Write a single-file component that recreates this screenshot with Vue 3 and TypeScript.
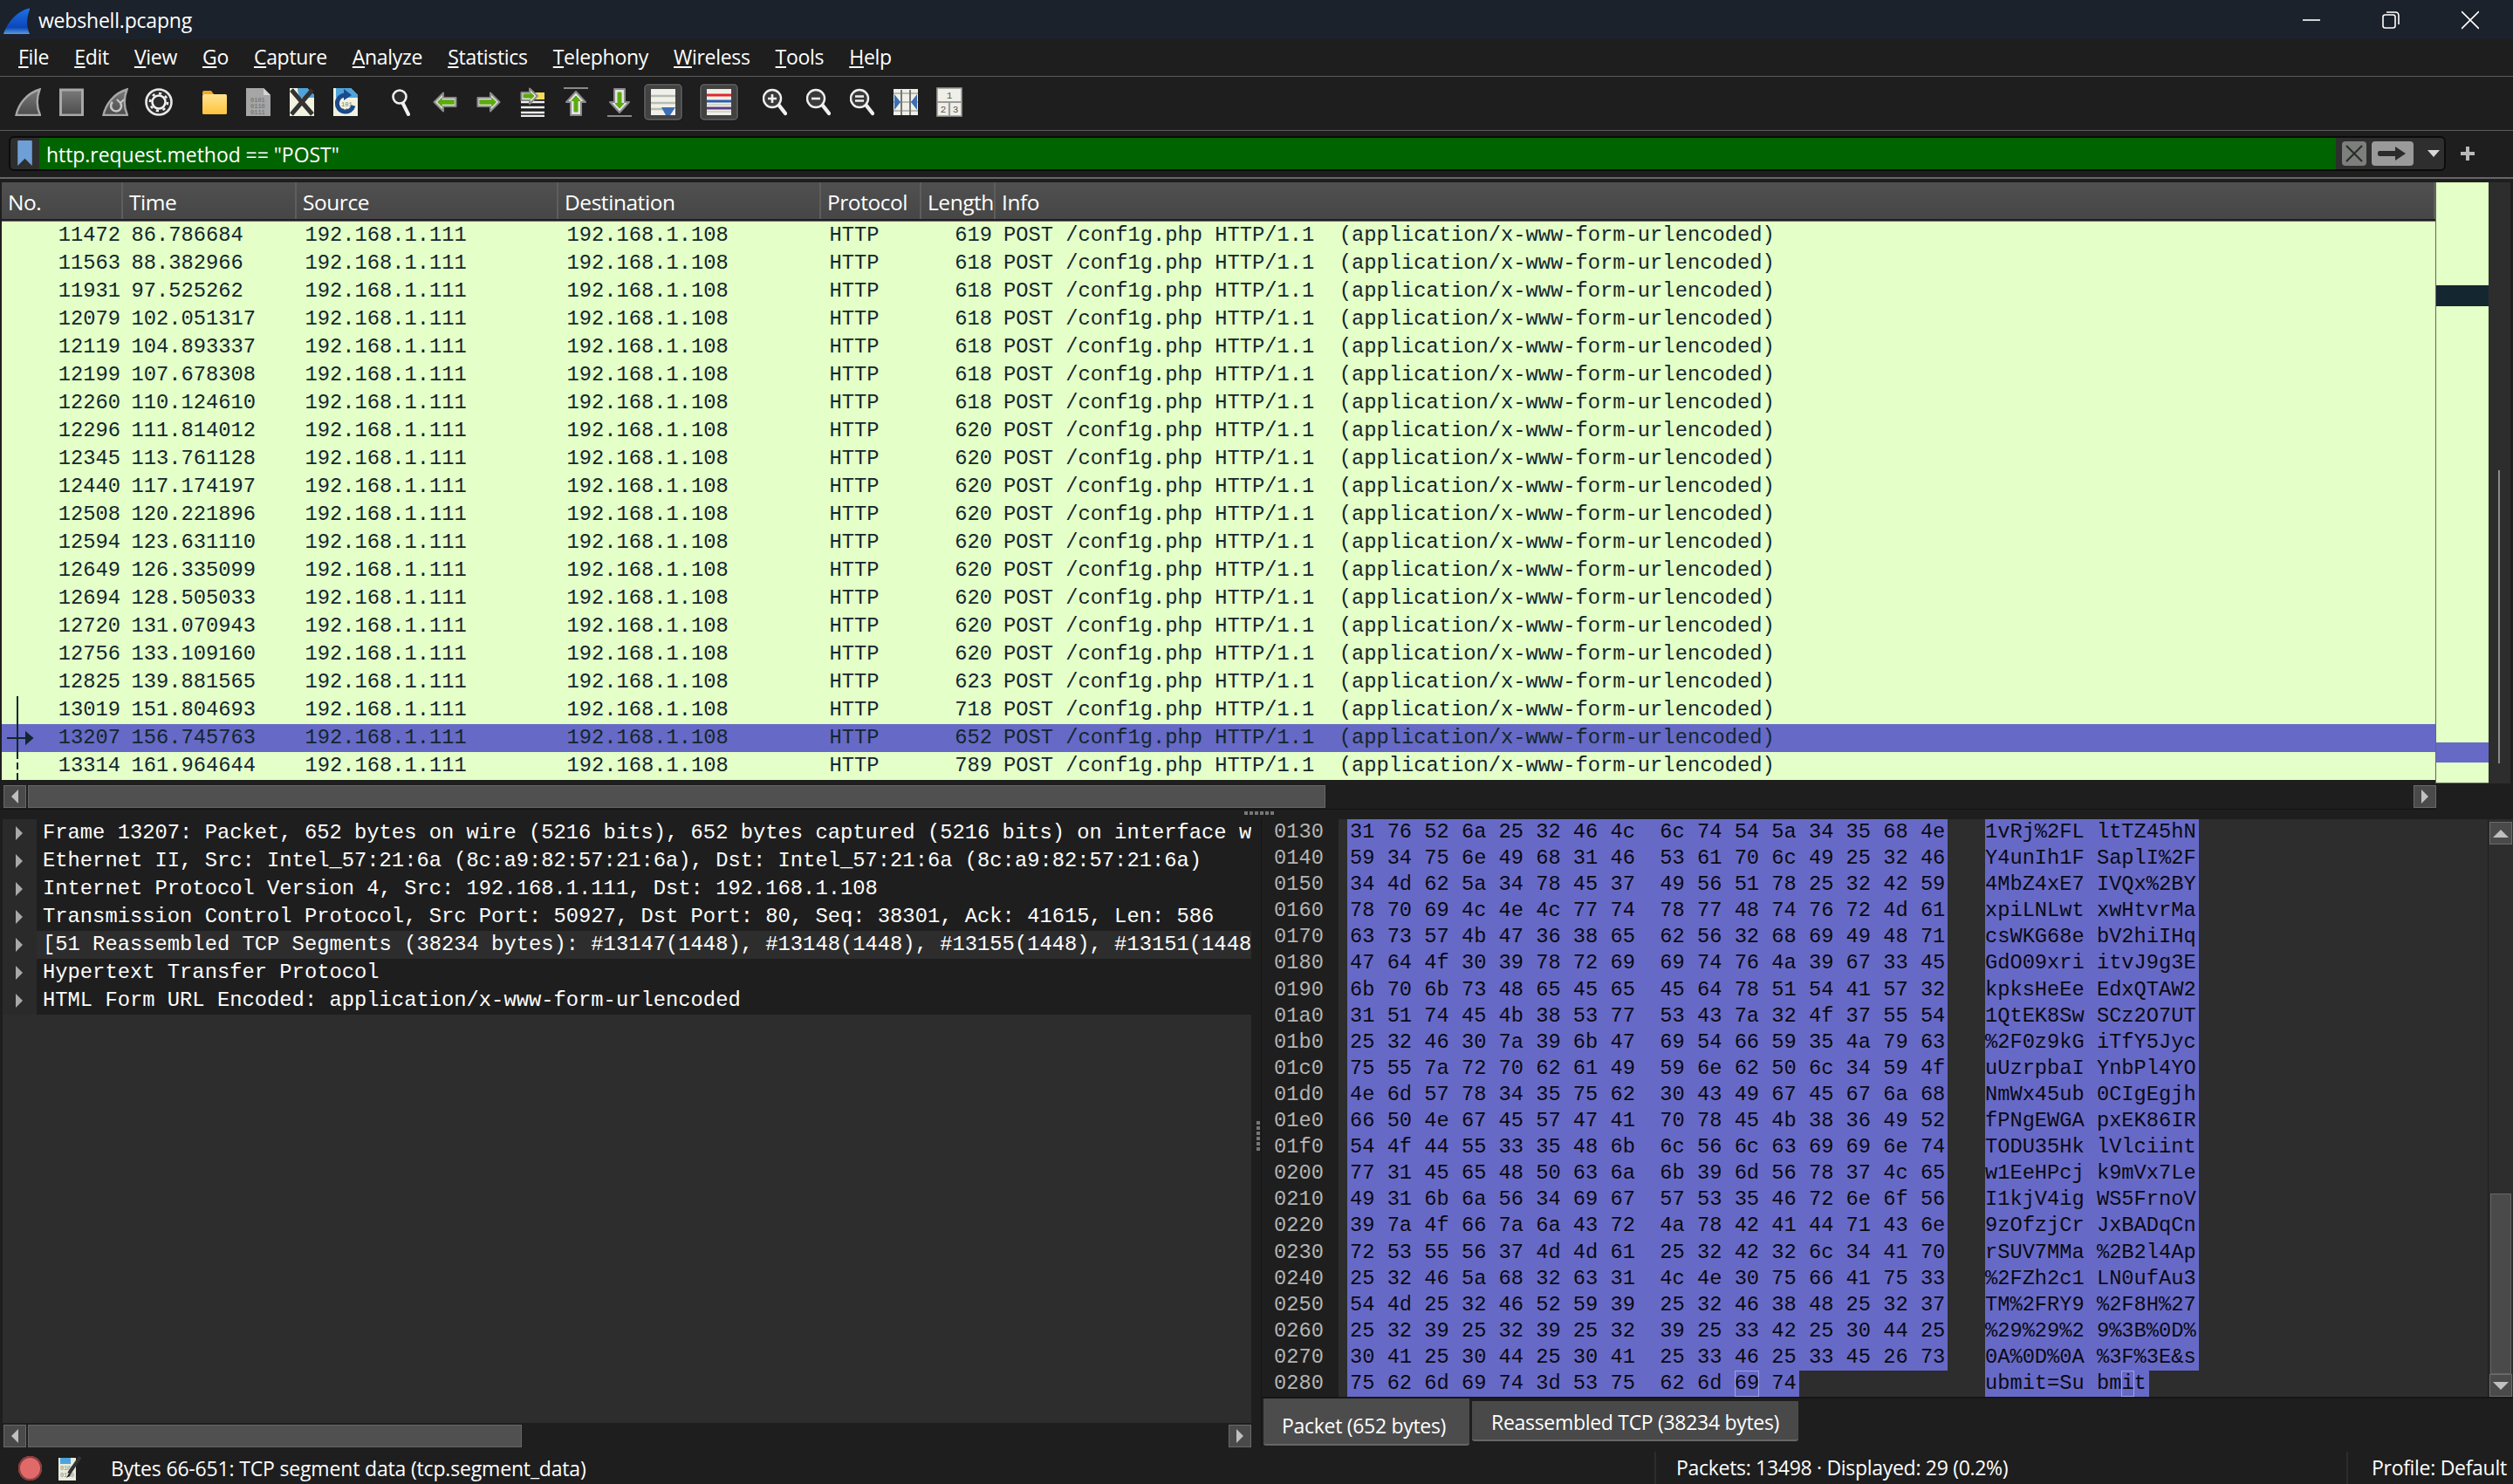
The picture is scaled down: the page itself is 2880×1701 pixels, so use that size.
<script setup lang="ts">
import { computed } from 'vue'

interface HexRow {
  offset: string
  hexBefore: string
  hexHot: string
  hexAfter: string
  asciiBefore: string
  asciiHot: string
  asciiAfter: string
}

const menus = ['File', 'Edit', 'View', 'Go', 'Capture', 'Analyze', 'Statistics', 'Telephony', 'Wireless', 'Tools', 'Help']

const columns = ['No.', 'Time', 'Source', 'Destination', 'Protocol', 'Length', 'Info']

const infoText = 'POST /conf1g.php HTTP/1.1  (application/x-www-form-urlencoded)'

const packets: [string, string, string][] = [
  ['11472', '86.786684', '619'],
  ['11563', '88.382966', '618'],
  ['11931', '97.525262', '618'],
  ['12079', '102.051317', '618'],
  ['12119', '104.893337', '618'],
  ['12199', '107.678308', '618'],
  ['12260', '110.124610', '618'],
  ['12296', '111.814012', '620'],
  ['12345', '113.761128', '620'],
  ['12440', '117.174197', '620'],
  ['12508', '120.221896', '620'],
  ['12594', '123.631110', '620'],
  ['12649', '126.335099', '620'],
  ['12694', '128.505033', '620'],
  ['12720', '131.070943', '620'],
  ['12756', '133.109160', '620'],
  ['12825', '139.881565', '623'],
  ['13019', '151.804693', '718'],
  ['13207', '156.745763', '652'],
  ['13314', '161.964644', '789']
]

const details = [
  'Frame 13207: Packet, 652 bytes on wire (5216 bits), 652 bytes captured (5216 bits) on interface w',
  'Ethernet II, Src: Intel_57:21:6a (8c:a9:82:57:21:6a), Dst: Intel_57:21:6a (8c:a9:82:57:21:6a)',
  'Internet Protocol Version 4, Src: 192.168.1.111, Dst: 192.168.1.108',
  'Transmission Control Protocol, Src Port: 50927, Dst Port: 80, Seq: 38301, Ack: 41615, Len: 586',
  '[51 Reassembled TCP Segments (38234 bytes): #13147(1448), #13148(1448), #13155(1448), #13151(1448',
  'Hypertext Transfer Protocol',
  'HTML Form URL Encoded: application/x-www-form-urlencoded'
]

const rawHex = [
  '31 76 52 6a 25 32 46 4c 6c 74 54 5a 34 35 68 4e',
  '59 34 75 6e 49 68 31 46 53 61 70 6c 49 25 32 46',
  '34 4d 62 5a 34 78 45 37 49 56 51 78 25 32 42 59',
  '78 70 69 4c 4e 4c 77 74 78 77 48 74 76 72 4d 61',
  '63 73 57 4b 47 36 38 65 62 56 32 68 69 49 48 71',
  '47 64 4f 30 39 78 72 69 69 74 76 4a 39 67 33 45',
  '6b 70 6b 73 48 65 45 65 45 64 78 51 54 41 57 32',
  '31 51 74 45 4b 38 53 77 53 43 7a 32 4f 37 55 54',
  '25 32 46 30 7a 39 6b 47 69 54 66 59 35 4a 79 63',
  '75 55 7a 72 70 62 61 49 59 6e 62 50 6c 34 59 4f',
  '4e 6d 57 78 34 35 75 62 30 43 49 67 45 67 6a 68',
  '66 50 4e 67 45 57 47 41 70 78 45 4b 38 36 49 52',
  '54 4f 44 55 33 35 48 6b 6c 56 6c 63 69 69 6e 74',
  '77 31 45 65 48 50 63 6a 6b 39 6d 56 78 37 4c 65',
  '49 31 6b 6a 56 34 69 67 57 53 35 46 72 6e 6f 56',
  '39 7a 4f 66 7a 6a 43 72 4a 78 42 41 44 71 43 6e',
  '72 53 55 56 37 4d 4d 61 25 32 42 32 6c 34 41 70',
  '25 32 46 5a 68 32 63 31 4c 4e 30 75 66 41 75 33',
  '54 4d 25 32 46 52 59 39 25 32 46 38 48 25 32 37',
  '25 32 39 25 32 39 25 32 39 25 33 42 25 30 44 25',
  '30 41 25 30 44 25 30 41 25 33 46 25 33 45 26 73',
  '75 62 6d 69 74 3d 53 75 62 6d 69 74'
]

// the byte under the cursor is boxed in both columns
const HOT_BYTE = 10

const hexRows = computed<HexRow[]>(() =>
  rawHex.map((line, i) => {
    const bytes = line.split(' ')
    const hexPart = (from: number, to: number) =>
      bytes.map((b, n) => ({ b, n })).slice(from, to)
        .map(({ b, n }) => (n === 8 ? ' ' : '') + b).join(' ')
    const asciiPart = (from: number, to: number) =>
      bytes.map((b, n) => ({ b, n })).slice(from, to)
        .map(({ b, n }) => (n === 8 ? ' ' : '') + String.fromCharCode(parseInt(b, 16))).join('')
    const isLast = i === rawHex.length - 1
    const offset = (0x130 + i * 16).toString(16).padStart(4, '0')
    if (!isLast) {
      return {
        offset,
        hexBefore: hexPart(0, 16),
        hexHot: '',
        hexAfter: '',
        asciiBefore: asciiPart(0, 16),
        asciiHot: '',
        asciiAfter: ''
      }
    }
    return {
      offset,
      hexBefore: hexPart(0, HOT_BYTE) + ' ',
      hexHot: bytes[HOT_BYTE],
      hexAfter: ' ' + bytes.slice(HOT_BYTE + 1).join(' '),
      asciiBefore: asciiPart(0, HOT_BYTE),
      asciiHot: String.fromCharCode(parseInt(bytes[HOT_BYTE], 16)),
      asciiAfter: asciiPart(HOT_BYTE + 1, bytes.length)
    }
  })
)
</script>

<template>
  <div class="window">
    <header class="titlebar">
      <svg class="logo" width="32" height="32" viewBox="0 0 32 32">
        <defs>
          <linearGradient id="finBlue" x1="0" y1="0" x2="0" y2="1">
            <stop offset="0" stop-color="#1d72e8" />
            <stop offset="0.75" stop-color="#0b47b8" />
            <stop offset="1" stop-color="#5a9be0" />
          </linearGradient>
          <linearGradient id="finGrey" x1="0" y1="0" x2="0" y2="1">
            <stop offset="0" stop-color="#7a7a7a" />
            <stop offset="1" stop-color="#4c4c4c" />
          </linearGradient>
          <linearGradient id="folderFill" x1="0" y1="0" x2="0" y2="1">
            <stop offset="0" stop-color="#ffe390" />
            <stop offset="1" stop-color="#fcc33c" />
          </linearGradient>
        </defs>
        <path d="M2 31 C6 20 15 5 33 1 C28 12 28 22 32 31 Z" fill="url(#finBlue)" />
      </svg>
      <span class="title-text">webshell.pcapng</span>
      <div class="win-controls">
        <svg width="20" height="22" viewBox="0 0 20 22"><path d="M0 11 H20" stroke="#fff" stroke-width="1.6" /></svg>
        <svg width="20" height="22" viewBox="0 0 20 22" fill="none" stroke="#fff" stroke-width="1.6">
          <rect x="1" y="5" width="14" height="15" rx="2.5" />
          <path d="M5 2 H15 Q19 2 19 6 V16" />
        </svg>
        <svg width="20" height="22" viewBox="0 0 20 22" stroke="#fff" stroke-width="1.6"><path d="M0 1 L20 21 M20 1 L0 21" /></svg>
      </div>
    </header>

    <nav class="menubar">
      <span v-for="m in menus" :key="m" class="menu-item"><u>{{ m[0] }}</u>{{ m.slice(1) }}</span>
    </nav>

    <div class="toolbar">
      <span class="tool">
        <svg width="30" height="32" viewBox="0 0 30 32"><path d="M1.5 31 C4 19 13 6 28.5 1.5 C24.5 12 25 22 29 31 Z" fill="url(#finGrey)" stroke="#a8a8a8" stroke-width="2.4" /></svg>
      </span>
      <span class="tool">
        <svg width="30" height="32" viewBox="0 0 30 32"><rect x="2.5" y="2" width="25" height="29" fill="url(#finGrey)" stroke="#a8a8a8" stroke-width="3" /></svg>
      </span>
      <span class="tool">
        <svg width="30" height="32" viewBox="0 0 30 32" fill="none">
          <path d="M1.5 31 C4 19 13 6 28.5 1.5 C24.5 12 25 22 29 31 Z" fill="url(#finGrey)" stroke="#a8a8a8" stroke-width="2.4" />
          <path d="M21 17 A6 6 0 1 1 12 16" stroke="#c8c8c8" stroke-width="2.5" />
          <path d="M17 13 L21 17 L25 13" stroke="#c8c8c8" stroke-width="2" />
        </svg>
      </span>
      <span class="tool">
        <svg width="32" height="34" viewBox="0 0 32 34" fill="none">
          <circle cx="16" cy="17" r="14.5" fill="#2c2c2c" stroke="#e8e8e8" stroke-width="2.6" />
          <circle cx="16" cy="17" r="7.5" stroke="#f2f2f2" stroke-width="2.6" />
          <circle cx="16" cy="17" r="10" stroke="#f2f2f2" stroke-width="2.6" stroke-dasharray="3.2 4.6" />
        </svg>
      </span>
      <span class="tool-sep"></span>
      <span class="tool">
        <svg width="30" height="32" viewBox="0 0 30 32">
          <path d="M1 5 Q1 3 3 3 H11 L14 7 H1 Z" fill="#f5a81e" />
          <rect x="1" y="7" width="28" height="23" rx="1.5" fill="url(#folderFill)" />
        </svg>
      </span>
      <span class="tool">
        <svg width="30" height="34" viewBox="0 0 30 34">
          <path d="M1 1 H21 L29 9 V33 H1 Z" fill="#a6a6a6" />
          <path d="M21 1 V9 H29 Z" fill="#d4d4d4" />
          <text class="bits" x="6" y="17" fill="#6a6a6a">0101</text>
          <text class="bits" x="6" y="24" fill="#6a6a6a">0110</text>
          <text class="bits" x="6" y="31" fill="#6a6a6a">0111</text>
        </svg>
      </span>
      <span class="tool">
        <svg width="30" height="34" viewBox="0 0 30 34">
          <path d="M1 1 H21 L29 9 V33 H1 Z" fill="#f1f3e0" />
          <path d="M10 1 H21 L29 9 V12 H14 Q10 8 10 1 Z" fill="#4ea3dc" />
          <path d="M3 3 L27 31 M27 3 L3 31" stroke="#333" stroke-width="5" />
        </svg>
      </span>
      <span class="tool">
        <svg width="30" height="34" viewBox="0 0 30 34" fill="none">
          <path d="M1 1 H21 L29 9 V33 H1 Z" fill="#f1f3e0" />
          <path d="M4 1 H21 L29 9 V12 H4 Z" fill="#4ea3dc" />
          <text class="bits" x="10" y="22" fill="#777">101</text>
          <text class="bits" x="10" y="29" fill="#777">110</text>
          <path d="M24 21 A9.5 9.5 0 1 1 15 9" stroke="#1b4a8c" stroke-width="5" />
          <path d="M13 2 L22 9 L13 15 Z" fill="#1b4a8c" />
        </svg>
      </span>
      <span class="tool-sep"></span>
      <span class="tool">
        <svg width="22" height="32" viewBox="0 0 22 32" fill="none">
          <circle cx="9" cy="10" r="7.5" fill="#2c2c2c" stroke="#f0f0f0" stroke-width="2.6" />
          <path d="M13 18 L19 30" stroke="#f0f0f0" stroke-width="4" stroke-linecap="round" />
        </svg>
      </span>
      <span class="tool">
        <svg width="28" height="24" viewBox="0 0 28 24">
          <path d="M1.5 12 L12 1.5 V7 H26.5 V17 H12 V22.5 Z" fill="#e4e4e4" stroke="#8a8a8a" stroke-width="2" stroke-linejoin="round" />
          <path d="M6 12 L10 8 V10 H24 V14 H10 V16 Z" fill="#5caa0f" stroke="#5caa0f" stroke-width="1.5" />
        </svg>
      </span>
      <span class="tool">
        <svg width="28" height="24" viewBox="0 0 28 24">
          <path d="M26.5 12 L16 1.5 V7 H1.5 V17 H16 V22.5 Z" fill="#e4e4e4" stroke="#8a8a8a" stroke-width="2" stroke-linejoin="round" />
          <path d="M22 12 L18 8 V10 H4 V14 H18 V16 Z" fill="#5caa0f" stroke="#5caa0f" stroke-width="1.5" />
        </svg>
      </span>
      <span class="tool">
        <svg width="28" height="34" viewBox="0 0 28 34">
          <rect x="14" y="6" width="14" height="8" fill="#f2dc5a" />
          <path d="M1 17 H28 M1 23 H28 M1 29 H28 M1 33 H28" stroke="#eee" stroke-width="2.6" />
          <path d="M20 10 L11 1.5 V6 H1.5 V15 H11 V19 Z" fill="#e4e4e4" stroke="#8a8a8a" stroke-width="2" stroke-linejoin="round" />
          <path d="M16 10 L12 6.5 V8 H4 V12 H12 V13.5 Z" fill="#5caa0f" stroke="#5caa0f" />
        </svg>
      </span>
      <span class="tool">
        <svg width="28" height="34" viewBox="0 0 28 34">
          <path d="M0 1 H28" stroke="#8a8a8a" stroke-width="2" />
          <path d="M14 5 L25 17 H20 V32 H8 V17 H3 Z" fill="#e4e4e4" stroke="#8a8a8a" stroke-width="2" stroke-linejoin="round" />
          <path d="M14 10 L19 15.5 H16 V28 H12 V15.5 H9 Z" fill="#5caa0f" stroke="#5caa0f" />
        </svg>
      </span>
      <span class="tool">
        <svg width="28" height="34" viewBox="0 0 28 34">
          <path d="M0 33 H28" stroke="#8a8a8a" stroke-width="2" />
          <path d="M14 29 L25 17 H20 V2 H8 V17 H3 Z" fill="#e4e4e4" stroke="#8a8a8a" stroke-width="2" stroke-linejoin="round" />
          <path d="M14 24 L19 18.5 H16 V6 H12 V18.5 H9 Z" fill="#5caa0f" stroke="#5caa0f" />
        </svg>
      </span>
      <span class="tool tool-on">
        <svg width="28" height="30" viewBox="0 0 28 30">
          <rect width="28" height="30" fill="#f0f0ea" />
          <path d="M0 8 H28 M0 16 H28 M0 23 H14" stroke="#b8bcae" stroke-width="2.4" />
          <path d="M12 21 H28 L22 30 H17 Z" fill="#3c6fb4" />
        </svg>
      </span>
      <span class="tool-sep"></span>
      <span class="tool tool-on">
        <svg width="28" height="30" viewBox="0 0 28 30">
          <rect width="28" height="30" fill="#f0f0ea" />
          <path d="M0 7 H28" stroke="#e0282c" stroke-width="3" />
          <path d="M0 14 H28" stroke="#2c5ca8" stroke-width="3" />
          <path d="M0 22 H28" stroke="#5c3c7c" stroke-width="3" />
          <path d="M0 18 H28 M0 26 H28" stroke="#b8bcae" stroke-width="1" />
        </svg>
      </span>
      <span class="tool-sep"></span>
      <span class="tool">
        <svg width="28" height="32" viewBox="0 0 28 32" fill="none">
          <circle cx="11" cy="12" r="10" fill="#3a3a3a" stroke="#f0f0f0" stroke-width="2.4" />
          <path d="M6 12 H16 M11 7 V17" stroke="#f0f0f0" stroke-width="2.6" />
          <path d="M19 20 L26 29" stroke="#f0f0f0" stroke-width="4.4" stroke-linecap="round" />
        </svg>
      </span>
      <span class="tool">
        <svg width="28" height="32" viewBox="0 0 28 32" fill="none">
          <circle cx="11" cy="12" r="10" fill="#3a3a3a" stroke="#f0f0f0" stroke-width="2.4" />
          <path d="M6 12 H16" stroke="#f0f0f0" stroke-width="2.6" />
          <path d="M19 20 L26 29" stroke="#f0f0f0" stroke-width="4.4" stroke-linecap="round" />
        </svg>
      </span>
      <span class="tool">
        <svg width="28" height="32" viewBox="0 0 28 32" fill="none">
          <circle cx="11" cy="12" r="10" fill="#3a3a3a" stroke="#f0f0f0" stroke-width="2.4" />
          <path d="M6 9.5 H16 M6 14.5 H16" stroke="#f0f0f0" stroke-width="2.4" />
          <path d="M19 20 L26 29" stroke="#f0f0f0" stroke-width="4.4" stroke-linecap="round" />
        </svg>
      </span>
      <span class="tool">
        <svg width="28" height="30" viewBox="0 0 28 30">
          <rect width="28" height="30" fill="#f0f0ea" />
          <path d="M0 5 H28 M0 15 H28 M0 25 H28" stroke="#b8bcae" stroke-width="2" />
          <path d="M9 1 V30 M19 1 V30" stroke="#777" stroke-width="2" />
          <path d="M1 6 L8 15 L1 24 Z M27 6 L20 15 L27 24 Z" fill="#3c6fb4" />
        </svg>
      </span>
      <span class="tool">
        <svg width="30" height="34" viewBox="0 0 30 34">
          <rect x="1" y="1" width="28" height="32" fill="#efefe8" stroke="#9a9a9a" stroke-width="1.6" />
          <path d="M1 17 H29 M15 17 V33" stroke="#9a9a9a" stroke-width="2.2" />
          <text class="cells" x="15" y="13" text-anchor="middle">1</text>
          <text class="cells" x="8" y="29" text-anchor="middle">2</text>
          <text class="cells" x="22" y="29" text-anchor="middle">3</text>
        </svg>
      </span>
    </div>

    <div class="filterbar">
      <div class="filter-box">
        <span class="bookmark">
          <svg width="17" height="29" viewBox="0 0 16 28"><path d="M0 1 Q0 0 1 0 H15 Q16 0 16 1 V28 L8 20 L0 28 Z" fill="#6e9fd6" /></svg>
        </span>
        <span class="filter-text">http.request.method == "POST"</span>
        <span class="filter-actions">
          <span class="f-btn f-clear">
            <svg width="20" height="20" viewBox="0 0 20 20"><path d="M1 1 L19 19 M19 1 L1 19" stroke="#2b2b2b" stroke-width="2.2" /></svg>
          </span>
          <span class="f-btn f-apply">
            <svg width="34" height="18" viewBox="0 0 34 18"><path d="M2 6 H20 V1 L32 9 L20 17 V12 H2 Q0 12 0 9 Q0 6 2 6 Z" fill="#2b2b2b" /></svg>
          </span>
          <span class="f-drop"></span>
        </span>
      </div>
      <svg class="f-plus" width="18" height="18" viewBox="0 0 18 18"><path d="M9 1 V17 M1 9 H17" stroke="#b8b8b8" stroke-width="4" /></svg>
    </div>

    <section class="list-pane">
      <div class="packet-list">
        <div class="list-head">
          <span v-for="c in columns" :key="c" class="head-cell">{{ c }}</span>
        </div>
        <div class="list-body">
          <div v-for="p in packets" :key="p[0]" class="packet" :class="{ selected: p[0] === '13207' }">
            <span class="c-no">{{ p[0] }}</span>
            <span class="c-pad">{{ p[1] }}</span>
            <span class="c-pad">192.168.1.111</span>
            <span class="c-pad">192.168.1.108</span>
            <span class="c-pad">HTTP</span>
            <span class="c-len">{{ p[2] }}</span>
            <span class="c-info">{{ infoText }}</span>
          </div>
          <svg class="related" width="36" height="96" viewBox="0 0 36 96" fill="none" stroke="#12272e" stroke-width="2">
            <path d="M16 0 V64" />
            <path d="M16 64 V96" stroke-dasharray="8 4" />
            <path d="M4 48 H26" />
            <path d="M26 42 L33 48 L26 54 Z" fill="#12272e" />
          </svg>
        </div>
      </div>
      <div class="minimap">
        <span class="mm-dark"></span>
        <span class="mm-sel"></span>
      </div>
      <div class="mini-scroll"><span class="mini-thumb"></span></div>
    </section>

    <div class="hbar list-hbar">
      <span class="sb-btn"><i class="tri tri-left"></i></span>
      <span class="sb-thumb list-thumb"></span>
      <span class="sb-fill"></span>
      <span class="sb-btn"><i class="tri tri-right"></i></span>
    </div>

    <div class="hsplit"><span class="hdots"></span></div>

    <section class="lower">
      <div class="details">
        <div class="tree">
          <div v-for="(d, i) in details" :key="i" class="tree-row" :class="{ alt: i === 4 }">
            <span class="branch"><i class="tri tri-tree"></i></span>
            <span class="tree-text">{{ d }}</span>
          </div>
        </div>
        <div class="hbar detail-hbar">
          <span class="sb-btn"><i class="tri tri-left"></i></span>
          <span class="sb-thumb detail-thumb"></span>
          <span class="sb-fill"></span>
          <span class="sb-btn"><i class="tri tri-right"></i></span>
        </div>
      </div>

      <div class="vsplit"><span class="vdots"></span></div>

      <div class="bytes">
        <div class="hex-pane">
          <div class="hex-view">
            <div v-for="r in hexRows" :key="r.offset" class="hex-row">
              <span class="offset">{{ r.offset }}</span>
              <span class="hex-col"><span class="sel hex-sel">{{ r.hexBefore }}<span v-if="r.hexHot" class="hot">{{ r.hexHot }}</span>{{ r.hexAfter }}</span></span>
              <span class="sel ascii-sel">{{ r.asciiBefore }}<span v-if="r.asciiHot" class="hot">{{ r.asciiHot }}</span>{{ r.asciiAfter }}</span>
            </div>
          </div>
          <div class="hex-scroll">
            <span class="sb-btn"><i class="tri tri-up"></i></span>
            <span class="hex-track"></span>
            <span class="hex-thumb"></span>
            <span class="sb-btn"><i class="tri tri-down"></i></span>
          </div>
        </div>
        <div class="tabs">
          <span class="tab tab-active">Packet (652 bytes)</span>
          <span class="tab">Reassembled TCP (38234 bytes)</span>
        </div>
      </div>
    </section>

    <footer class="statusbar">
      <span class="led"></span>
      <svg class="note" width="26" height="28" viewBox="0 0 26 28">
        <path d="M0 2 H20 V28 H0 Z" fill="#e9ecdc" />
        <path d="M2 2 H14 V9 H2 Z" fill="#4ea3dc" />
        <text class="bits" x="2" y="16" fill="#888">0101</text>
        <text class="bits" x="2" y="24" fill="#888">0110</text>
        <path d="M25 1 L12 20" stroke="#333" stroke-width="4" />
        <path d="M12 20 L9 25 L14 22 Z" fill="#111" />
      </svg>
      <span class="status-msg">Bytes 66-651: TCP segment data (tcp.segment_data)</span>
      <span class="status-cell status-packets">Packets: 13498 · Displayed: 29 (0.2%)</span>
      <span class="status-cell status-profile">Profile: Default</span>
    </footer>
  </div>
</template>

<style>
html, body {
  margin: 0;
  background: #1e1e1e;
  overflow: hidden;
}
</style>

<style scoped>
.window {
  width: 2880px;
  height: 1701px;
  display: flex;
  flex-direction: column;
  background: #1e1e1e;
  color: #fff;
  font-family: "Open Sans", "Noto Sans", sans-serif;
  font-size: 23px;
  overflow: hidden;
}

.titlebar {
  height: 45px;
  flex: none;
  display: flex;
  align-items: center;
  background: #1c222b;
  box-sizing: border-box;
  padding-left: 2px;
}
.logo { margin-top: 2px; }
.title-text {
  margin-left: 10px;
  letter-spacing: -0.2px;
}
.win-controls {
  margin-left: auto;
  display: flex;
  gap: 71px;
  padding-right: 39px;
}

.menubar {
  height: 43px;
  flex: none;
  box-sizing: border-box;
  display: flex;
  align-items: center;
  gap: 29px;
  padding: 0 0 3px 21px;
  border-bottom: 1px solid #5c5c5c;
  letter-spacing: -0.3px;
}

.toolbar {
  height: 62px;
  flex: none;
  box-sizing: border-box;
  display: flex;
  align-items: center;
  padding: 0 0 3px 7px;
  border-bottom: 1px solid #5c5c5c;
}
.tool {
  width: 50px;
  height: 42px;
  box-sizing: border-box;
  display: flex;
  align-items: center;
  justify-content: center;
  flex: none;
}
.tool-on {
  width: 44px;
  margin: 0 3px;
  background: #424242;
  border: 2px solid #555;
  border-radius: 5px;
  box-shadow: 0 0 0 1px #161616;
}
.tool-sep {
  width: 14px;
  flex: none;
}
.bits {
  font: 7px "Liberation Mono", monospace;
}
.cells {
  font: 11px "Liberation Mono", monospace;
  fill: #555;
}

.filterbar {
  height: 55px;
  flex: none;
  box-sizing: border-box;
  display: flex;
  align-items: center;
  padding: 0 0 2px 10px;
  border-bottom: 2px solid #666;
}
.filter-box {
  width: 2793px;
  height: 40px;
  box-sizing: border-box;
  display: flex;
  background: #2e2e2e;
  border: 2px solid #0c0c0c;
  border-radius: 6px;
}
.bookmark {
  width: 33px;
  flex: none;
  display: flex;
  align-items: center;
  justify-content: center;
}
.filter-text {
  flex: 1;
  background: #006400;
  padding: 2px 0 0 8px;
  line-height: 34px;
  letter-spacing: -0.05px;
}
.filter-actions {
  width: 124px;
  flex: none;
  display: flex;
  align-items: center;
  gap: 6px;
  padding-left: 7px;
  box-sizing: border-box;
}
.f-btn {
  height: 28px;
  border-radius: 4px;
  display: flex;
  align-items: center;
  justify-content: center;
}
.f-clear { width: 28px; background: #7d7f7c; }
.f-apply { width: 48px; background: #9a9a9a; }
.f-drop {
  margin-left: 10px;
  width: 0;
  height: 0;
  border: 7px solid transparent;
  border-top: 8px solid #d8d8d8;
  border-bottom: 0;
}
.f-plus { margin-left: 16px; }

.list-pane {
  height: 689px;
  margin-top: 4px;
  flex: none;
  display: flex;
}
.packet-list {
  width: 2792px;
  flex: none;
  box-sizing: border-box;
  padding-left: 2px;
  font-family: "Liberation Mono", monospace;
  font-size: 23.75px;
  border-right: 1px solid #666;
}
.list-head, .packet {
  display: grid;
  grid-template-columns: 139px 199px 300px 301px 115px 85px 1fr;
}
.list-head {
  height: 44px;
  box-sizing: border-box;
  background: linear-gradient(#505050, #464646);
  border-bottom: 2px solid #202020;
  font-family: "Open Sans", "Noto Sans", sans-serif;
  font-size: 24.5px;
  letter-spacing: -0.45px;
}
.head-cell {
  padding: 3px 0 0 7px;
  line-height: 40px;
  box-sizing: border-box;
  height: 42px;
  border-right: 2px solid #5e5e5e;
  white-space: nowrap;
  overflow: hidden;
}
.list-body {
  position: relative;
  border-top: 1px solid #666;
}
.packet {
  height: 32px;
  line-height: 32px;
  background: #e4ffc7;
  color: #12272e;
  white-space: pre;
}
.packet.selected { background: #6769c6; }
.c-no { text-align: right; padding-right: 3px; }
.c-pad { padding-left: 9.5px; }
.c-len { text-align: right; padding-right: 4px; }
.c-info { padding-left: 9px; }
.related {
  position: absolute;
  left: 2px;
  top: 544px;
}
.minimap {
  width: 60px;
  flex: none;
  position: relative;
  background: #e4ffc7;
  border-bottom: 1px solid #666;
  box-sizing: border-box;
}
.mm-dark, .mm-sel {
  position: absolute;
  left: 0;
  right: 0;
}
.mm-dark { top: 118px; height: 24px; background: #142630; }
.mm-sel { top: 642px; height: 23px; background: #6769c6; }
.mini-scroll {
  width: 25px;
  flex: none;
  background: #2d2d2d;
  position: relative;
}
.mini-thumb {
  position: absolute;
  left: 11px;
  top: 330px;
  width: 2px;
  height: 336px;
  background: #8a8a8a;
}

.hbar {
  height: 30px;
  flex: none;
  box-sizing: border-box;
  display: flex;
  align-items: center;
  padding: 2px 0 2px 4px;
  background: #1e1e1e;
}
.list-hbar {
  width: 2792px;
  border-bottom: 1px solid #141414;
}
.sb-btn {
  width: 26px;
  height: 26px;
  flex: none;
  box-sizing: border-box;
  display: flex;
  align-items: center;
  justify-content: center;
  background: #4a4a4a;
  border: 1px solid #6a6a6a;
}
.sb-thumb {
  height: 26px;
  box-sizing: border-box;
  flex: none;
  margin-left: 2px;
  background: #505050;
  border: 1px solid #666;
}
.sb-fill { flex: 1; }
.list-thumb { width: 1487px; }
.detail-thumb { width: 566px; }
.tri {
  display: block;
  width: 0;
  height: 0;
  border: 0 solid transparent;
}
.tri-left { border-width: 8px 8px 8px 0; border-right-color: #c0c0c0; }
.tri-right { border-width: 8px 0 8px 8px; border-left-color: #c0c0c0; }
.tri-up { border-width: 0 9px 9px; border-bottom-color: #c0c0c0; }
.tri-down { border-width: 9px 9px 0; border-top-color: #c0c0c0; }
.tri-tree { border-width: 8px 0 8px 8px; border-left-color: #a8a8a8; }

.hsplit {
  height: 10px;
  flex: none;
  position: relative;
}
.hdots {
  position: absolute;
  left: 1426px;
  top: 2px;
  width: 34px;
  height: 4px;
  background: repeating-linear-gradient(90deg, #777 0 4px, transparent 4px 6px);
}

.lower {
  flex: 1;
  min-height: 0;
  display: flex;
}
.details {
  width: 1434px;
  flex: none;
  display: flex;
  flex-direction: column;
}
.tree {
  flex: 1;
  min-height: 0;
  margin: 1px 0 0 3px;
  background: #2d2d2d;
  font-family: "Liberation Mono", monospace;
  font-size: 23.8px;
  overflow: hidden;
}
.tree-row {
  height: 32px;
  display: flex;
  line-height: 32px;
}
.branch {
  width: 39px;
  flex: none;
  display: flex;
  align-items: center;
  padding-left: 15px;
  box-sizing: border-box;
  background: #2a2a2a;
}
.tree-text {
  flex: 1;
  min-width: 0;
  padding-left: 7px;
  background: #1e1e1e;
  white-space: pre;
  overflow: hidden;
}
.tree-row.alt .tree-text { background: #2d2d2d; }
.detail-hbar {
  height: 28px;
  margin-top: 1px;
}

.vsplit {
  width: 11px;
  flex: none;
  position: relative;
  border-right: 1px solid #141414;
}
.vdots {
  position: absolute;
  left: 6px;
  top: 347px;
  width: 4px;
  height: 34px;
  background: repeating-linear-gradient(180deg, #777 0 4px, transparent 4px 6px);
}
.bytes {
  flex: 1;
  min-width: 0;
  display: flex;
  flex-direction: column;
}
.hex-pane {
  height: 664px;
  flex: none;
  margin-top: 1px;
  display: flex;
  background: #2d2d2d;
  border-bottom: 2px solid #161616;
  box-sizing: border-box;
}
.hex-view {
  flex: 1;
  font-family: "Liberation Mono", monospace;
  font-size: 23.7px;
  background: linear-gradient(90deg, #1e1e1e 88px, #2d2d2d 88px);
}
.hex-row {
  height: 30.1px;
  line-height: 30.1px;
  display: flex;
  white-space: pre;
}
.offset {
  width: 98px;
  flex: none;
  box-sizing: border-box;
  padding-left: 14px;
  color: #b4b4b4;
}
.hex-col {
  width: 731px;
  flex: none;
}
.sel {
  display: inline-block;
  background: #6769c6;
  color: #0a0a14;
}
.hex-sel { padding: 0 3px 0 3px; }
.ascii-sel { padding-right: 3px; }
.hot {
  display: inline-block;
  height: 30px;
  box-shadow: inset 0 0 0 1px #a0a2ec;
}
.hex-scroll {
  width: 29px;
  flex: none;
  position: relative;
  display: flex;
  flex-direction: column;
  align-items: center;
  background: #2d2d2d;
  border-left: 1px solid #1e1e1e;
  padding-top: 3px;
  box-sizing: border-box;
}
.hex-track { flex: 1; }
.hex-thumb {
  position: absolute;
  left: 2px;
  top: 429px;
  width: 24px;
  height: 207px;
  box-sizing: border-box;
  background: #4a4a4a;
  border: 1px solid #666;
}
.tabs {
  flex: 1;
  display: flex;
  align-items: flex-start;
  padding-left: 2px;
  gap: 3px;
}
.tab {
  height: 46px;
  margin-top: 3px;
  line-height: 48px;
  padding: 0 22px;
  background: #494949;
  border-bottom: 2px solid #666;
  border-radius: 0 0 3px 3px;
  box-sizing: border-box;
  letter-spacing: -0.3px;
}
.tab-active {
  height: 54px;
  margin-top: 0;
  line-height: 62px;
  background: #4c4c4c;
  width: 236px;
  box-sizing: border-box;
  padding: 0 0 0 21px;
}

.statusbar {
  height: 41px;
  flex: none;
  box-sizing: border-box;
  padding-top: 4px;
  display: flex;
  align-items: center;
  letter-spacing: -0.3px;
}
.led {
  width: 27px;
  height: 28px;
  flex: none;
  margin-left: 21px;
  border-radius: 50%;
  background: #e06a6a;
  box-shadow: inset 0 0 0 2px #8a3c3c;
}
.note { margin-left: 19px; flex: none; }
.status-msg {
  margin-left: 34px;
  width: 1769px;
  flex: none;
  letter-spacing: -0.17px;
}
.status-cell {
  border-left: 2px solid #2c2c2c;
  height: 37px;
  line-height: 37px;
  box-sizing: border-box;
  flex: none;
}
.status-packets {
  width: 793px;
  padding-left: 23px;
}
.status-profile {
  padding-left: 27px;
  flex: 1;
}
</style>
